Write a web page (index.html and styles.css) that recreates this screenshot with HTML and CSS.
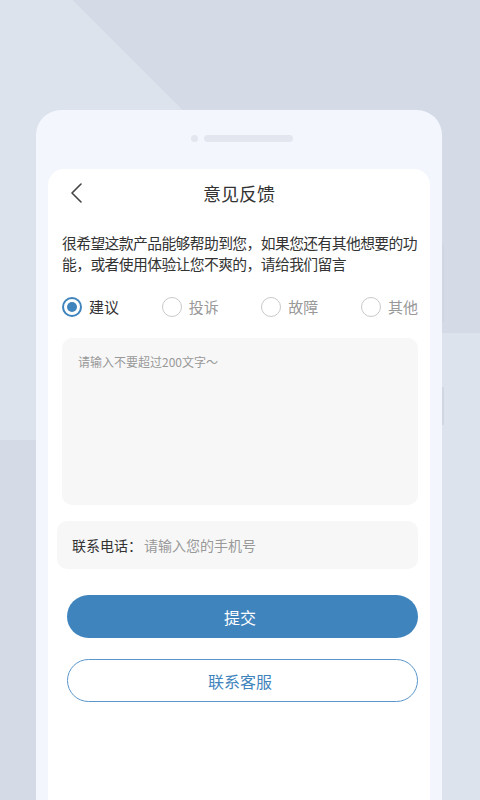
FILE: index.html
```html
<!DOCTYPE html>
<html lang="zh-CN">
<head>
<meta charset="utf-8">
<title>意见反馈</title>
<link rel="stylesheet" href="styles.css">
</head>
<body>
<div class="phone">
  <span class="side-btn side-btn-a"></span>
  <span class="side-btn side-btn-b"></span>
  <div class="notch"><span class="cam"></span><span class="speaker"></span></div>
  <main class="card">
    <header class="nav">
      <svg class="back" width="12" height="20" viewBox="0 0 12 20" aria-hidden="true">
        <path d="M11 1 L2 10 L11 19" fill="none" stroke="#444" stroke-width="1.6" stroke-linecap="round" stroke-linejoin="round"/>
      </svg>
      <h1 class="title">意见反馈</h1>
      <span></span>
    </header>
    <p class="desc">很希望这款产品能够帮助到您，如果您还有其他想要的功能，或者使用体验让您不爽的，请给我们留言</p>
    <div class="types">
      <label class="type type-on"><span class="radio"></span><span class="type-text">建议</span></label>
      <label class="type"><span class="radio"></span><span class="type-text">投诉</span></label>
      <label class="type"><span class="radio"></span><span class="type-text">故障</span></label>
      <label class="type"><span class="radio"></span><span class="type-text">其他</span></label>
    </div>
    <textarea class="content" placeholder="请输入不要超过200文字～"></textarea>
    <div class="phone-field">
      <span class="phone-label">联系电话：</span>
      <input class="phone-input" type="text" placeholder="请输入您的手机号">
    </div>
    <button class="btn btn-primary" type="button">提交</button>
    <button class="btn btn-outline" type="button">联系客服</button>
  </main>
</div>
</body>
</html>
```

FILE: styles.css
```css
html, body {
  margin: 0;
  padding: 0;
}

body {
  width: 480px;
  height: 800px;
  overflow: hidden;
  font-family: "Noto Sans CJK SC", "Noto Sans", sans-serif;
  background-color: #d4dbe6;
  background-image:
    linear-gradient(#dce3ed, #dce3ed),
    linear-gradient(45deg, #dce3ed 362.7px, transparent 362.7px);
  background-size: 40px 467px, 480px 440px;
  background-position: 440px 333px, 0 0;
  background-repeat: no-repeat;
}

.phone {
  position: relative;
  box-sizing: border-box;
  width: 406px;
  height: 690px;
  margin: 110px 0 0 36px;
  padding-top: 25px;
  background: #f3f6fd;
  border-radius: 25px 25px 0 0;
  display: flex;
  flex-direction: column;
}

.side-btn {
  position: absolute;
  right: -2px;
  width: 2px;
  background: #d0d7e2;
}

.side-btn-a {
  top: 135px;
  height: 77px;
}

.side-btn-b {
  top: 277px;
  height: 38px;
}

.notch {
  display: flex;
  justify-content: center;
  align-items: center;
  gap: 6px;
  height: 7px;
  padding-left: 6px;
}

.cam {
  width: 7px;
  height: 7px;
  border-radius: 50%;
  background: #e3e6ee;
}

.speaker {
  width: 89px;
  height: 7px;
  border-radius: 4px;
  background: #e3e6ee;
}

.card {
  flex: 1;
  margin: 27px 12px 0;
  padding: 0 12px 0 14px;
  background: #ffffff;
  border-radius: 16px 16px 0 0;
}

.nav {
  display: grid;
  grid-template-columns: 1fr auto 1fr;
  align-items: center;
  height: 48px;
  margin: 0 -12px 0 -14px;
}

.back {
  display: block;
  margin-left: 22px;
}

.title {
  margin: 0;
  font-size: 18px;
  font-weight: normal;
  line-height: 24px;
  color: #333333;
}

.desc {
  width: 360px;
  margin: 14.5px 0 0;
  font-size: 14.8px;
  letter-spacing: -0.6px;
  line-height: 21px;
  color: #333333;
}

.types {
  display: flex;
  justify-content: space-between;
  align-items: center;
  height: 20px;
  margin-top: 23.5px;
}

.type {
  display: flex;
  align-items: center;
  gap: 7px;
  font-size: 15px;
  line-height: 20px;
  color: #999999;
}

.radio {
  box-sizing: border-box;
  width: 20px;
  height: 20px;
  border-radius: 50%;
  border: 1px solid #c9c9c9;
  display: flex;
  align-items: center;
  justify-content: center;
}

.type-on {
  color: #333333;
}

.type-on .radio {
  border: 2px solid #3f84bd;
}

.type-on .radio::after {
  content: "";
  width: 10px;
  height: 10px;
  border-radius: 50%;
  background: #3f84bd;
}

.content {
  display: block;
  box-sizing: border-box;
  width: 356px;
  height: 167px;
  margin: 21px 0 0;
  padding: 15px 16px;
  border: none;
  border-radius: 10px;
  background: #f7f7f7;
  resize: none;
  outline: none;
  font-family: inherit;
  font-size: 12px;
  line-height: 17px;
  color: #333333;
}

.content::placeholder {
  color: #999999;
}

.phone-field {
  display: flex;
  align-items: center;
  box-sizing: border-box;
  width: 361px;
  height: 48px;
  margin: 16px 0 0 -5px;
  padding-left: 15px;
  border-radius: 10px;
  background: #f7f7f7;
}

.phone-label {
  font-size: 14px;
  line-height: 20px;
  color: #333333;
}

.phone-input {
  flex: 1;
  min-width: 0;
  margin-left: 2px;
  padding: 0;
  border: none;
  outline: none;
  background: transparent;
  font-family: inherit;
  font-size: 14px;
  line-height: 20px;
  color: #333333;
}

.phone-input::placeholder {
  color: #999999;
}

.btn {
  display: block;
  box-sizing: border-box;
  width: 351px;
  height: 43px;
  margin-left: 5px;
  padding: 0 5px 0 0;
  border-radius: 22px;
  font-family: inherit;
  font-size: 16px;
  line-height: 20px;
  cursor: pointer;
}

.btn-primary {
  margin-top: 26px;
  border: none;
  background: #3f84bd;
  color: #ffffff;
}

.btn-outline {
  margin-top: 21px;
  border: 1px solid #5a96cb;
  background: #ffffff;
  color: #3f84bd;
}
```
